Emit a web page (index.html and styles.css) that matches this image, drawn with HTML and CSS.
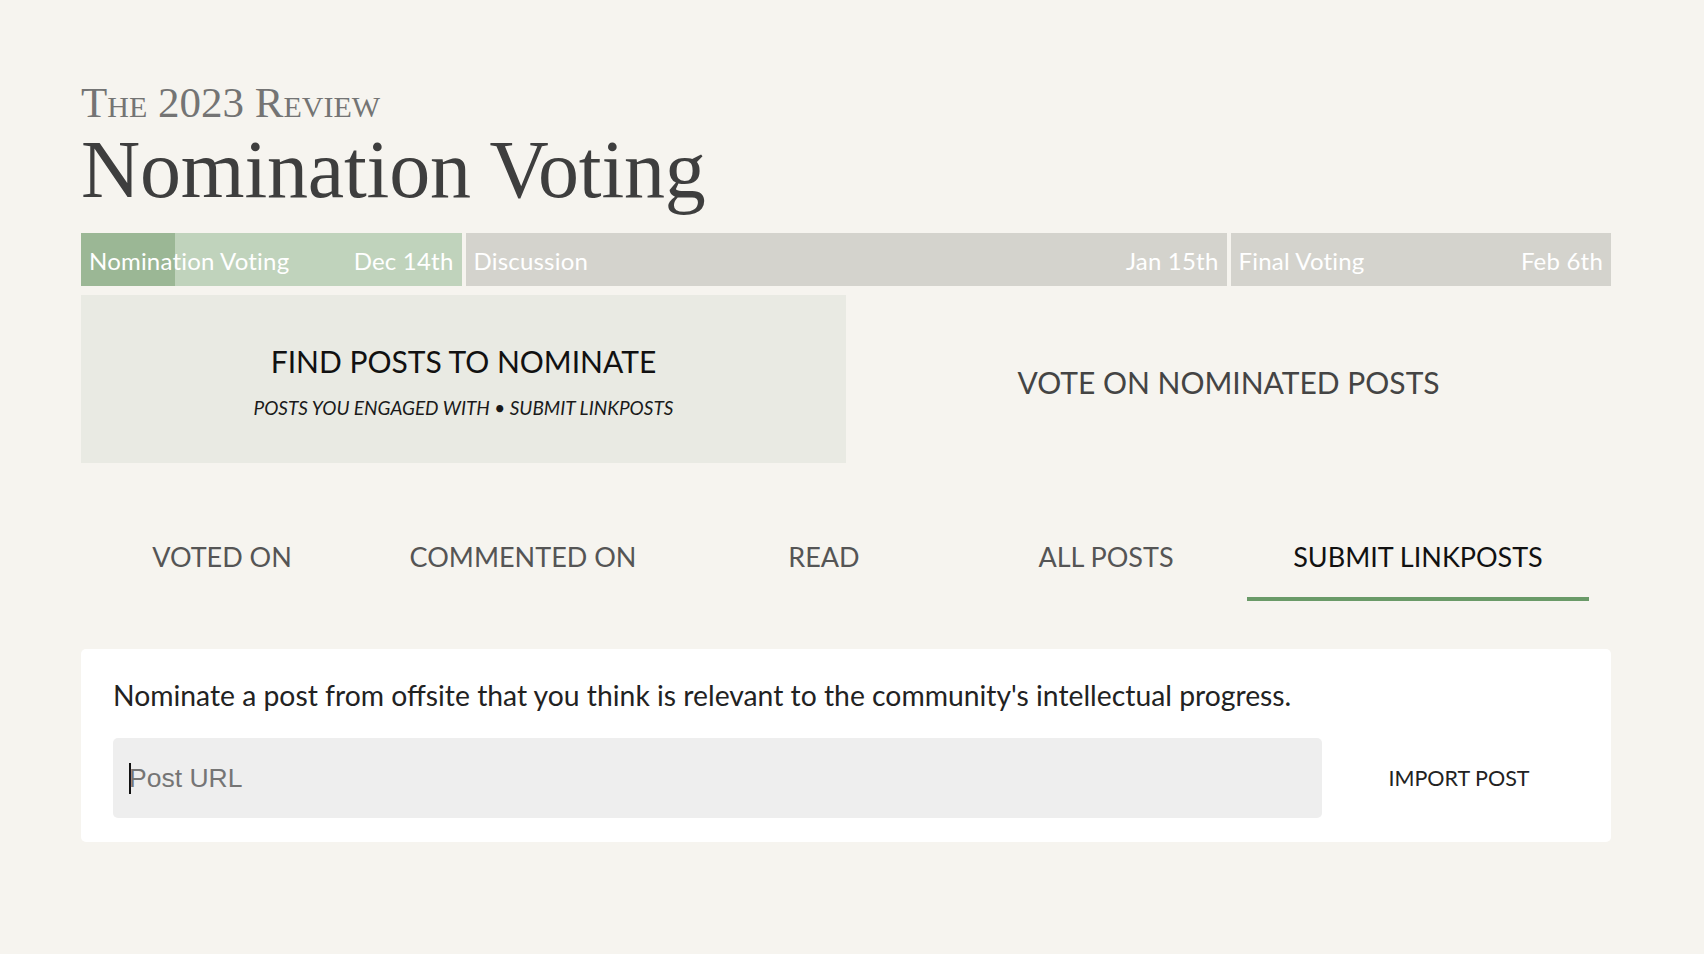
FILE: index.html
```html
<!DOCTYPE html>
<html lang="en">
<head>
  <meta charset="UTF-8">
  <meta name="viewport" content="width=device-width, initial-scale=1.0">
  <title>Nomination Voting</title>
  <link rel="stylesheet" href="styles.css">
</head>
<body>
  <div class="page">
    <header class="review-header">
      <div class="review-kicker">The 2023 Review</div>
      <h1 class="review-title">Nomination Voting</h1>
    </header>

    <div class="timeline">
      <div class="phase phase-current">
        <span>Nomination Voting</span>
        <span>Dec 14th</span>
      </div>
      <div class="phase">
        <span>Discussion</span>
        <span>Jan 15th</span>
      </div>
      <div class="phase">
        <span>Final Voting</span>
        <span>Feb 6th</span>
      </div>
    </div>

    <div class="modes">
      <div class="mode mode-active">
        <div class="mode-title">Find Posts to Nominate</div>
        <div class="mode-sub">Posts you engaged with &bull; Submit linkposts</div>
      </div>
      <div class="mode">
        <div class="mode-title">Vote on Nominated Posts</div>
      </div>
    </div>

    <nav class="tabs">
      <a class="tab">Voted On</a>
      <a class="tab tab-wide">Commented On</a>
      <a class="tab">Read</a>
      <a class="tab">All Posts</a>
      <a class="tab tab-active">Submit Linkposts</a>
    </nav>

    <div class="card">
      <p class="card-text">Nominate a post from offsite that you think is relevant to the community's intellectual progress.</p>
      <form class="import-row">
        <input type="text" class="url-input" placeholder="Post URL" autofocus>
        <button type="button" class="import-btn">Import Post</button>
      </form>
    </div>
  </div>
</body>
</html>
```

FILE: styles.css
```css
body {
  margin: 0;
  padding: 0;
  background-color: #f6f4ef;
  font-family: Lato, "Open Sans", sans-serif;
  color: #222;
}
.page {
  width: 1530px;
  margin-left: 81px;
  padding-top: 82px;
}

/* header */
.review-kicker {
  font-family: "Liberation Serif", serif;
  font-variant: small-caps;
  font-size: 43px;
  line-height: 42px;
  color: #747474;
}
.review-title {
  margin: 5px 0 0;
  font-family: "Liberation Serif", serif;
  font-weight: normal;
  font-size: 82px;
  line-height: 82px;
  letter-spacing: -0.2px;
  color: #3e3e3e;
}

/* phases */
.timeline {
  display: grid;
  grid-template-columns: 1fr 2fr 1fr;
  gap: 4px;
  margin-top: 22px;
}
.phase {
  height: 53px;
  display: flex;
  align-items: center;
  justify-content: space-between;
  padding: 2px 8px 0 8px;
  box-sizing: border-box;
  background-color: #d4d3cd;
  color: white;
  font-size: 24px;
  letter-spacing: 0.2px;
}
.phase-current {
  background: linear-gradient(to right, #9bb795 94px, #c0d3bc 94px);
}

/* mode switch */
.modes {
  display: flex;
  margin-top: 9px;
}
.mode {
  flex: 1;
  height: 168px;
  display: flex;
  flex-direction: column;
  align-items: center;
  justify-content: center;
  text-transform: uppercase;
}
.mode-active {
  background-color: #e9eae3;
}
.mode-title {
  font-size: 30px;
  color: #444;
  padding-top: 6px;
}
.mode-active .mode-title {
  color: #111;
  padding-top: 4px;
}
.mode-sub {
  margin-top: 17px;
  font-size: 19px;
  font-style: italic;
  color: #1a1a1a;
}

/* tabs */
.tabs {
  display: flex;
  margin-top: 51px;
}
.tab {
  flex: none;
  width: 282px;
  height: 87px;
  padding-top: 1px;
  box-sizing: border-box;
  display: flex;
  align-items: center;
  justify-content: center;
  border-bottom: 4px solid transparent;
  text-transform: uppercase;
  font-size: 27px;
  color: #555;
  cursor: pointer;
}
.tab-wide {
  width: 320px;
}
.tab-active {
  width: 342px;
  color: #111;
  border-bottom-color: #6a9a68;
}

/* linkpost card */
.card {
  margin-top: 48px;
  background: white;
  border-radius: 5px;
  padding: 28px 32px 24px;
}
.card-text {
  margin: 0;
  font-size: 28.3px;
  line-height: 36px;
  color: #222;
}
.import-row {
  display: flex;
  align-items: center;
  margin-top: 25px;
}
.url-input {
  flex: 1;
  height: 80px;
  padding: 0 16px;
  border: none;
  border-radius: 5px;
  /* focused caret drawn as a thin bar at the start of the field */
  background: linear-gradient(#111, #111) 16px center / 2px 31px no-repeat, #eeeeee;
  font-family: "Liberation Sans", Arial, sans-serif;
  font-size: 26.5px;
  color: #222;
  outline: none;
  caret-color: #000;
}
.url-input::placeholder {
  color: #757575;
}
.import-btn {
  width: 174px;
  margin: 0 33px 0 50px;
  padding: 8px 0;
  border: none;
  background: none;
  text-transform: uppercase;
  font-family: Lato, "Open Sans", sans-serif;
  font-size: 21.5px;
  color: #222;
  cursor: pointer;
}
```
